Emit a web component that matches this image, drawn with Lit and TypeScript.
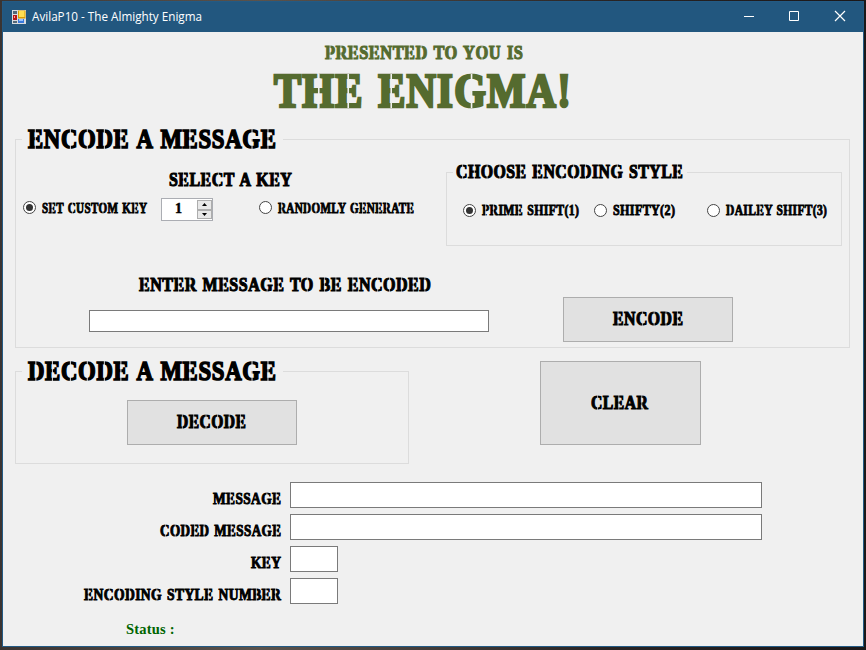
import { LitElement, html, svg, css } from "lit";
import { customElement, property, state } from "lit/decorators.js";

// Where the bridge of each stencilled capital sits, as a share of its advance.
const BRIDGES: Record<string, number> = {
  B: 0.45, C: 0.55, D: 0.46, E: 0.46, G: 0.53, H: 0.5, O: 0.5, P: 0.48, R: 0.44,
};

/** Stencil lettering: its box is exactly the cap height by the given width. */
@customElement("stencil-text")
export class StencilText extends LitElement {
  @property() text = "";
  @property({ type: Number }) width = 100;
  @property({ type: Number }) cap = 13;
  @state() private cuts = "";

  static styles = css`
    :host { display: block; flex: none; line-height: 0; }
    svg { display: block; overflow: visible; }
    text {
      font-family: "Liberation Serif", serif;
      font-weight: 700;
      word-spacing: 0.08em;
      letter-spacing: 0.03em;
      fill: currentColor;
      stroke: currentColor;
    }
    path { stroke: var(--surface, #f0f0f0); fill: none; }
  `;

  firstUpdated() {
    const t = this.renderRoot.querySelector("text") as SVGTextElement;
    let d = "";
    [...this.text].forEach((ch, i) => {
      const at = BRIDGES[ch];
      if (at === undefined) return;
      const a = t.getStartPositionOfChar(i).x;
      const b = t.getEndPositionOfChar(i).x;
      d += `M${(a + (b - a) * at).toFixed(2)} -1V${this.cap + 1}`;
    });
    this.cuts = d;
  }

  render() {
    const { width, cap } = this;
    return html`<svg width=${width} height=${cap}>
      ${svg`<text x="0" y=${cap} font-size=${cap / 0.67} stroke-width=${cap * 0.085}
        textLength=${width + cap * 0.03} lengthAdjust="spacingAndGlyphs">${this.text}</text>
        <path d=${this.cuts} stroke-width=${Math.max(0.6, cap * 0.05)}></path>`}
    </svg>`;
  }
}

const st = (text: string, width: number, cap: number) =>
  html`<stencil-text .text=${text} .width=${width} .cap=${cap}></stencil-text>`;

@customElement("app-root")
export class AppRoot extends LitElement {
  static styles = css`
    :host {
      display: block;
      box-sizing: border-box;
      width: 866px;
      height: 650px;
      padding: 1px 2px 3px 2px;
      overflow: hidden;
      background: linear-gradient(90deg, #3a3432, #5b534c 30%, #292424 70%, #1b1718);
      color: #000;
    }
    * { box-sizing: border-box; }
    .window {
      display: flex;
      flex-direction: column;
      width: 862px;
      height: 646px;
      border: 1px solid #235a84;
      background: #f0f0f0;
    }
    .titlebar {
      display: flex;
      align-items: center;
      flex: none;
      height: 30px;
      padding: 0 17px 0 9px;
      background: #22577f;
      color: #fff;
    }
    .titlebar svg { display: block; flex: none; position: relative; top: -0.5px; }
    .titlebar .controls svg { top: -1px; }
    .caption {
      margin-left: 6px;
      flex: 1;
      font: 11.7px "Open Sans", "Noto Sans", sans-serif;
      position: relative;
      top: -1px;
    }
    .controls { display: flex; gap: 34px; align-items: center; }
    .client { display: flex; flex-direction: column; padding: 14px 12px 0 12px; }
    .header {
      display: flex;
      flex-direction: column;
      align-items: flex-start;
      gap: 16px;
      color: #556b2f;
    }
    .header .small { margin-left: 310px; }
    .header .big { margin-left: 259px; }
    .group { border: 1px solid #dcdcdc; display: flex; flex-direction: column; align-items: flex-start; }
    .legend { background: #f0f0f0; flex: none; }
    .encode { width: 835px; height: 209px; margin-top: 32px; }
    .legend.large { margin: -11px 0 0 6px; padding: 1px 7px 1px 6px; width: 261px; height: 20px; }
    .options { display: flex; margin-top: 13px; height: 96px; align-items: flex-start; }
    .keys { width: 430px; padding-top: 11px; display: flex; flex-direction: column; }
    .keys .heading { margin-left: 153px; }
    .choices { display: flex; align-items: center; }
    .keys .choices { margin: 12px 0 0 7px; height: 23px; }
    .radio {
      width: 13px;
      height: 13px;
      flex: none;
      border: 1px solid #444;
      border-radius: 50%;
      background: #fff;
      display: flex;
      align-items: center;
      justify-content: center;
      margin-right: 6px;
    }
    .radio.on::after { content: ""; width: 7px; height: 7px; border-radius: 50%; background: #333; }
    .keys .radio { position: relative; top: -2px; }
    .keys .choices > stencil-text { position: relative; top: -2px; }
    .number {
      display: flex;
      width: 52px;
      height: 23px;
      border: 1px solid #abadb3;
      background: #fff;
      margin: 0 46px 0 14px;
      padding: 1px 0 0 13px;
    }
    .number .value {
      width: 22px;
      font: bold 14px/17px "Liberation Serif", serif;
      -webkit-text-stroke: 0.5px #000;
    }
    .spin { display: flex; flex-direction: column; width: 15px; height: 19px; background: #e8e8e8; }
    .spin span {
      height: 9.5px;
      border: 1px solid #adadad;
      display: flex;
      align-items: center;
      justify-content: center;
    }
    .spin svg { display: block; }
    .styles { width: 396px; height: 74px; margin-top: 10px; }
    .legend.medium { margin: -8px 0 0 6px; padding: 0 4px 2px 3px; width: 234px; height: 16px; }
    .styles .choices { margin: 23px 0 0 16px; }
    .styles .choices > stencil-text { position: relative; top: -0.5px; }
    .compose { display: flex; align-items: flex-start; width: 100%; }
    .entry { width: 474px; padding: 20px 0 0 73px; }
    .entry stencil-text { margin-left: 50px; }
    .box { display: block; border: 1px solid #7a7a7a; background: #fff; }
    .entry .box { width: 400px; height: 22px; margin-top: 19px; }
    .button {
      display: flex;
      align-items: center;
      justify-content: center;
      width: 170px;
      height: 45px;
      padding: 0 1px 2px 0;
      border: 1px solid #adadad;
      border-radius: 0;
      background: #e1e1e1;
      color: #000;
      --surface: #e1e1e1;
    }
    .compose .button { margin: 39px 0 0 73px; }
    .middle { display: flex; align-items: flex-start; margin-top: 13px; }
    .decode { width: 394px; height: 93px; margin-top: 10px; }
    .decode .button { margin: 19px 0 0 111px; }
    .button.clear { width: 161px; height: 84px; margin-left: 131px; padding: 0 2px 1px 0; }
    .results {
      display: grid;
      grid-template-columns: 266px auto;
      grid-auto-rows: 26px;
      row-gap: 6px;
      column-gap: 9px;
      margin-top: 18px;
    }
    .results .label { display: flex; justify-content: flex-end; padding-top: 11px; }
    .results .box { width: 472px; height: 26px; }
    .results .box.short { width: 48px; }
    .status {
      margin: 16px 0 0 111px;
      font: bold 14.5px/18px "Liberation Serif", serif;
      letter-spacing: 0.2px;
      color: #006400;
    }
  `;

  private radio(label: string, width: number, on = false) {
    return html`<span class="radio ${on ? "on" : ""}"></span>${st(label, width, 10)}`;
  }

  private result(label: string, width: number, short = false) {
    return html`<div class="label">${st(label, width, 11)}</div>
      <div class="box ${short ? "short" : ""}"></div>`;
  }

  render() {
    return html`
      <div class="window">
        <div class="titlebar">
          <svg width="14" height="14" viewBox="0 0 14 14">
            <rect width="14" height="14" fill="#d9dce0"></rect>
            <path d="M1 1h4v3H1zM1 11h4v2H1z" fill="#526878"></path>
            <rect x="1" y="5" width="4" height="5" fill="#b51618"></rect>
            <rect x="2" y="6" width="1" height="2" fill="#ff9b90"></rect>
            <rect x="6" y="0.5" width="7.5" height="8" fill="#d99c00"></rect>
            <rect x="7" y="1" width="5.5" height="6" fill="#ffdf52"></rect>
            <rect x="6" y="9" width="6" height="4" fill="#3979dc"></rect>
            <rect x="7" y="9" width="4" height="2" fill="#9bc5ff"></rect>
          </svg>
          <span class="caption">AvilaP10 - The Almighty Enigma</span>
          <div class="controls">
            <svg width="12" height="12"><path d="M1 6.5h10" stroke="#fff"></path></svg>
            <svg width="11" height="12"><path d="M.5 1.5h9v9h-9z" fill="none" stroke="#fff"></path></svg>
            <svg width="12" height="12"><path d="M1 1l10 10M11 1L1 11" stroke="#fff" stroke-width="1.2"></path></svg>
          </div>
        </div>

        <div class="client">
          <div class="header">
            <div class="small">${st("PRESENTED TO YOU IS", 198, 13)}</div>
            <div class="big">${st("THE ENIGMA!", 297, 32)}</div>
          </div>

          <div class="group encode">
            <div class="legend large">${st("ENCODE A MESSAGE", 248, 18)}</div>
            <div class="options">
              <div class="keys">
                <div class="heading">${st("SELECT A KEY", 123, 13)}</div>
                <div class="choices">
                  ${this.radio("SET CUSTOM KEY", 105, true)}
                  <div class="number">
                    <div class="value">1</div>
                    <div class="spin">
                      <span><svg width="5" height="3"><path d="M0 3L2.5 0 5 3z"></path></svg></span>
                      <span><svg width="5" height="3"><path d="M0 0h5L2.5 3z"></path></svg></span>
                    </div>
                  </div>
                  ${this.radio("RANDOMLY GENERATE", 136)}
                </div>
              </div>
              <div class="group styles">
                <div class="legend medium">${st("CHOOSE ENCODING STYLE", 227, 13)}</div>
                <div class="choices">
                  ${this.radio("PRIME SHIFT(1)", 97, true)}
                  <span style="width:15px"></span>
                  ${this.radio("SHIFTY(2)", 62)}
                  <span style="width:32px"></span>
                  ${this.radio("DAILEY SHIFT(3)", 101)}
                </div>
              </div>
            </div>
            <div class="compose">
              <div class="entry">
                ${st("ENTER MESSAGE TO BE ENCODED", 292, 13)}
                <div class="box"></div>
              </div>
              <button class="button">${st("ENCODE", 70, 13)}</button>
            </div>
          </div>

          <div class="middle">
            <div class="group decode">
              <div class="legend large">${st("DECODE A MESSAGE", 248, 18)}</div>
              <button class="button">${st("DECODE", 69, 13)}</button>
            </div>
            <button class="button clear">${st("CLEAR", 57, 13)}</button>
          </div>

          <div class="results">
            ${this.result("MESSAGE", 68, false)}
            ${this.result("CODED MESSAGE", 121, false)}
            ${this.result("KEY", 30, true)}
            ${this.result("ENCODING STYLE NUMBER", 197, true)}
          </div>
          <div class="status">Status :</div>
        </div>
      </div>
    `;
  }
}
